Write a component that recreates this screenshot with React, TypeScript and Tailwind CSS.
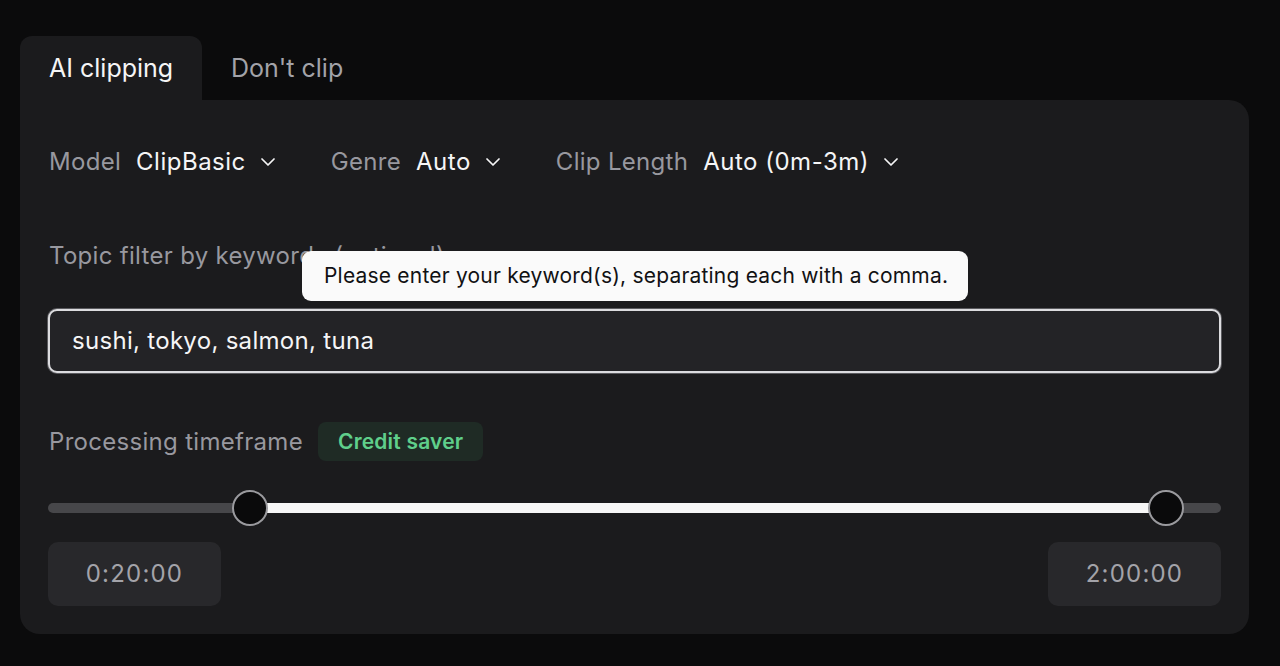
function Chevron() {
  return (
    <svg width="14" height="8" viewBox="0 0 14 8" fill="none" className="text-[#f5f5f6]">
      <polyline points="1,1 7,7 13,1" stroke="currentColor" strokeWidth="1.7" strokeLinecap="round" strokeLinejoin="round" />
    </svg>
  );
}

function Picker({ label, value }: { label: string; value: string }) {
  return (
    <div className="flex items-center">
      <span className="text-[#98989f]">{label}</span>
      <span className="ml-[15px] tracking-[0.5px] text-[#f5f5f6]">{value}</span>
      <span className="ml-[15px] flex items-center">
        <Chevron />
      </span>
    </div>
  );
}

function TimeBox({ value }: { value: string }) {
  return (
    <div className="flex h-[64px] w-[173px] items-center justify-center rounded-[10px] bg-[#28282b] text-[24px] tracking-[1.2px] text-[#a3a3a9]">
      {value}
    </div>
  );
}

export default function App() {
  return (
    <div
      className="min-h-[666px] w-full bg-[#0b0b0c] px-[20px] pt-[36px]"
      style={{ fontFamily: "Inter, 'Liberation Sans', sans-serif" }}
    >
      {/* tabs */}
      <div className="flex h-[64px] items-center">
        <div className="flex h-full w-[182px] items-center rounded-t-[12px] bg-[#1b1b1d] pl-[29px] pt-[2px] text-[25px] text-[#f5f5f6]">
          AI clipping
        </div>
        <div className="flex h-full items-center pl-[29px] pt-[2px] text-[25px] text-[#a3a3a9]">Don't clip</div>
      </div>

      {/* panel */}
      <div className="flex w-[1229px] flex-col rounded-b-[20px] rounded-tr-[20px] bg-[#1b1b1d] pb-[28px] pl-[28px] pr-[28px] pt-[46px] text-[24px] tracking-[0.3px]">
        <div className="flex h-[32px] items-center gap-[56px] pl-px">
          <Picker label="Model" value="ClipBasic" />
          <Picker label="Genre" value="Auto" />
          <Picker label="Clip Length" value="Auto (0m-3m)" />
        </div>

        <div className="relative mt-[62px] flex h-[32px] items-center pl-px text-[#98989f]">
          Topic filter by keywords (optional)
          <div className="absolute left-[254px] top-[11px] flex h-[50px] w-[666px] items-center rounded-[9px] bg-[#fafafa] pl-[22px] text-[21px] tracking-[0.2px] text-[#111113]">
            Please enter your keyword(s), separating each with a comma.
          </div>
        </div>

        <div className="mt-[37px] flex h-[64px] items-center rounded-[9px] border-2 border-[#dcdcdf] bg-[#232326] pl-[22px] text-[#f5f5f6] shadow-[0_0_0_1px_#5a5a5e]">
          sushi, tokyo, salmon, tuna
        </div>

        <div className="mt-[49px] flex h-[39px] items-center pl-px">
          <span className="text-[#98989f]">Processing timeframe</span>
          <span className="ml-[15px] flex h-[39px] items-center rounded-[8px] bg-[#1f2b25] px-[20px] text-[21px] font-semibold tracking-[0.2px] text-[#5fcf8b]">
            Credit saver
          </span>
        </div>

        {/* range slider */}
        <div className="relative mt-[29px] flex h-[36px] items-center">
          <div className="h-[10px] w-full rounded-full bg-[#47474a]" />
          <div className="absolute left-[202px] right-[54px] top-[13px] h-[10px] bg-[#f7f7f7]" />
          <div className="absolute left-[184px] top-0 h-[36px] w-[36px] rounded-full border-2 border-[#9a9a9e] bg-[#0a0a0b]" />
          <div className="absolute left-[1100px] top-0 h-[36px] w-[36px] rounded-full border-2 border-[#9a9a9e] bg-[#0a0a0b]" />
        </div>

        <div className="mt-[16px] flex justify-between">
          <TimeBox value="0:20:00" />
          <TimeBox value="2:00:00" />
        </div>
      </div>
    </div>
  );
}
